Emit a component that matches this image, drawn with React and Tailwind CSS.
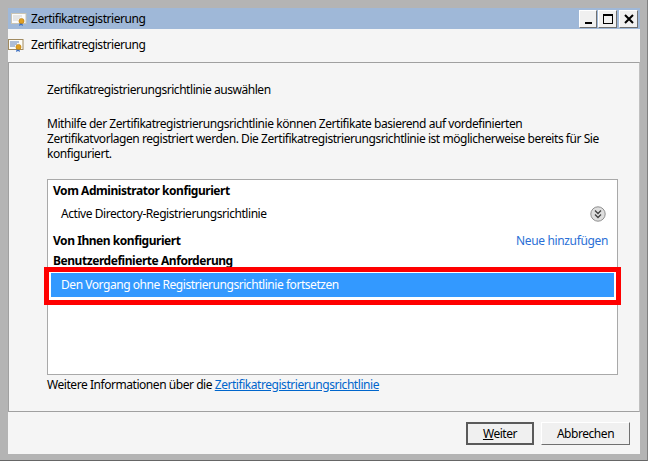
import React from "react";

const font = { fontFamily: '"Noto Sans", "Open Sans", sans-serif' };

function CertIcon({ small }) {
  return (
    <svg width="16" height="16" viewBox="0 0 16 16" className="shrink-0">
      <rect x="0.5" y="2.5" width="14.5" height="10" fill={small ? "#fbfbfb" : "#fdfdf8"} stroke={small ? "#c9c4b4" : "#a08a60"} />
      <path d="M2 5h9M2 7h7M2 9h5" stroke={small ? "#d0d0d0" : "#5f7fb5"} strokeWidth="1" />
      <path d="M9 11l-1 4 2-1 2 1-1-4z" fill="#3a6fc4" />
      <circle cx="10.5" cy="10" r="2.6" fill="#e0a020" stroke="#b87a10" strokeWidth="0.6" />
    </svg>
  );
}

function WinBtn({ children, w }) {
  return (
    <div className={w + " h-[18px] bg-[#f0f0f0] border border-t-white border-l-white border-r-[#707070] border-b-[#707070] flex items-center justify-center"}>
      {children}
    </div>
  );
}

function Btn({ children, def, w }) {
  return (
    <div className={w + " h-[23px] flex items-center justify-center text-[12px] text-black bg-[#f0f0f0] border " + (def ? "border-[#5a5a5a] border-2" : "border-t-white border-l-white border-r-[#707070] border-b-[#707070]")}>
      {children}
    </div>
  );
}

export default function App() {
  return (
    <div style={font} className="w-[648px] h-[461px] bg-[#b4b4b4] border-r border-b border-r-[#808080] border-b-[#666666] pt-2 pl-2 pr-[7px] pb-[6px] flex flex-col text-[12px] leading-4 text-black tracking-[-0.45px] whitespace-nowrap overflow-hidden">
      <div className="h-[21px] bg-[#9fb8d8] flex items-center pl-[3px] pr-[2px] shrink-0">
        <CertIcon small />
        <span className="ml-1 flex-1">Zertifikatregistrierung</span>
        <div className="flex gap-[1px]">
          <WinBtn w="w-[18px]">
            <div className="w-[7px] h-[2px] bg-black mt-[8px]" />
          </WinBtn>
          <WinBtn w="w-[19px]">
            <div className="w-[10px] h-[10px] border border-black border-t-2" />
          </WinBtn>
          <div className="ml-[1px]">
            <WinBtn w="w-[19px]">
              <svg width="10" height="10" viewBox="0 0 10 10">
                <path d="M1 1l8 8M9 1l-8 8" stroke="#000" strokeWidth="2" />
              </svg>
            </WinBtn>
          </div>
        </div>
      </div>
      <div className="flex-1 bg-[#f5f5f5] flex flex-col min-h-0">
        <div className="h-[33px] flex items-center shrink-0 pb-[1px]">
          <CertIcon />
          <span className="ml-[7px]">Zertifikatregistrierung</span>
        </div>
        <div className="h-[350px] w-[632px] shrink-0 border border-[#a0a0a0] border-r-[#c0c0c0] pl-[38px] pr-[21px] flex flex-col">
          <div className="mt-[19px] h-4">Zertifikatregistrierungsrichtlinie auswählen</div>
          <div className="mt-[18px] leading-[15px]">
            <div>Mithilfe der Zertifikatregistrierungsrichtlinie können Zertifikate basierend auf vordefinierten</div>
            <div>Zertifikatvorlagen registriert werden. Die Zertifikatregistrierungsrichtlinie ist möglicherweise bereits für Sie</div>
            <div>konfiguriert.</div>
          </div>
          <div className="mt-[18px] h-[196px] bg-white border border-[#a9a9a9] flex flex-col pl-[5px] pr-[8px] relative">
            <div className="font-bold mt-[3px] h-4">Vom Administrator konfiguriert</div>
            <div className="mt-[7px] h-4 pl-[8px] flex items-center justify-between">
              <span>Active Directory-Registrierungsrichtlinie</span>
              <svg width="16" height="16" viewBox="0 0 16 16" className="mr-[3px]">
                <circle cx="8" cy="8" r="7.2" fill="#dedede" stroke="#8f8f8f" />
                <path d="M5 4.5l3 3 3-3M5 8.5l3 3 3-3" fill="none" stroke="#404040" strokeWidth="1.3" />
              </svg>
            </div>
            <div className="mt-[11px] h-4 flex items-center justify-between">
              <span className="font-bold">Von Ihnen konfiguriert</span>
              <span className="text-[#2a6fd6] tracking-[-0.35px] mr-[1px]">Neue hinzufügen</span>
            </div>
            <div className="font-bold mt-[4px] h-4">Benutzerdefinierte Anforderung</div>
            <div className="relative mt-[4px] -ml-[2px] -mr-[5px] h-[24px] bg-[#3399ff] text-white flex items-center pl-[10px]">
              Den Vorgang ohne Registrierungsrichtlinie fortsetzen
              <div className="absolute -left-[7px] -right-[7px] -top-[6px] -bottom-[8px] border-[5px] border-[#ff0000]" />
            </div>
          </div>
          <div className="mt-[2px] h-4">
            Weitere Informationen über die <span className="text-[#0066cc] underline">Zertifikatregistrierungsrichtlinie</span>
          </div>
        </div>
        <div className="flex-1 flex justify-end items-center gap-[7px] pr-[10px] pt-[1px]">
          <Btn def w="w-[68px]"><span><span className="underline">W</span>eiter</span></Btn>
          <Btn w="w-[89px]">Abbrechen</Btn>
        </div>
      </div>
    </div>
  );
}
